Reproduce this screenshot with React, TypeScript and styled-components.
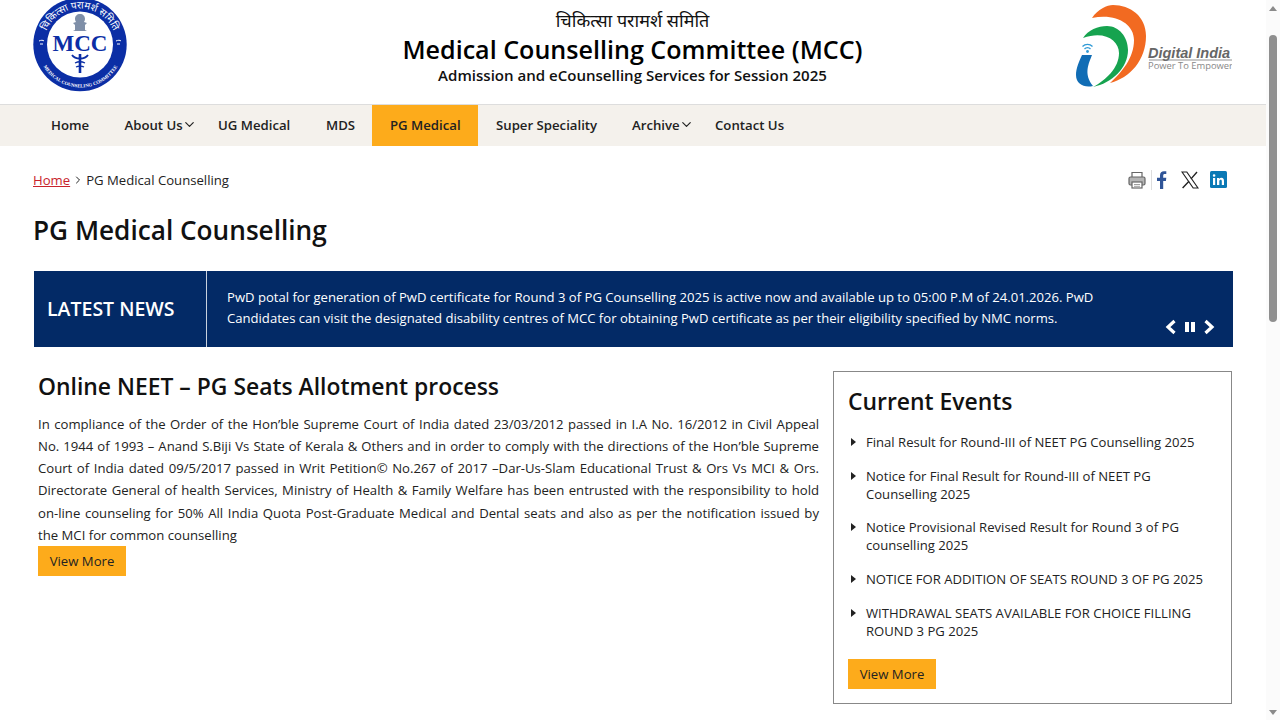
import React from "react";
import styled, { createGlobalStyle } from "styled-components";
import { ChevronDown, ChevronRight } from "lucide-react";

const Global = createGlobalStyle`
  html, body { margin: 0; padding: 0; background: #fff; overflow: hidden; height: 720px; }
  body { font-family: "Open Sans", "Noto Sans", sans-serif; color: #111; }
  a { text-decoration: none; color: inherit; }
`;

const Page = styled.div`
  width: 1266px;
  height: 720px;
  overflow: hidden;
`;
const Header = styled.header`
  height: 104px;
  padding: 0 34px 0 33px;
  display: grid;
  grid-template-columns: 200px 1fr 200px;
  box-sizing: border-box;
  align-items: start;
`;
const HeaderCenter = styled.div`
  text-align: center;
  padding-top: 8px;
`;
const Hindi = styled.div`
  font-size: 18px;
  line-height: 24px;
  color: #111;
`;
const SiteTitle = styled.div`
  font-size: 25.1px;
  font-weight: 600;
  line-height: 33px;
  margin-top: 1px;
  color: #000;
`;
const SiteSub = styled.div`
  font-size: 15.05px;
  font-weight: 600;
  line-height: 20px;
  margin-top: -1px;
  color: #111;
`;
const DigitalWrap = styled.div`
  display: flex;
  justify-content: flex-end;
`;
const Nav = styled.nav`
  height: 42px;
  border-top: 1px solid #ddd;
  background: #f4f1ec;
  box-sizing: border-box;
  padding-left: 33px;
  display: flex;
  align-items: stretch;
`;
const NavItem = styled.a<{ $active?: boolean; $w: number }>`
  width: ${(p) => p.$w}px;
  display: flex;
  align-items: center;
  padding: 0 0 2px 18px;
  box-sizing: border-box;
  font-size: 13.2px;
  font-weight: 600;
  color: #222;
  background: ${(p) => (p.$active ? "#fdab1b" : "transparent")};
  white-space: nowrap;
  svg { margin-left: -1px; }
`;
const Container = styled.main`
  padding: 0 33px;
`;
const TopRow = styled.div`
  height: 68px;
  display: flex;
  justify-content: space-between;
  align-items: center;
`;
const Crumbs = styled.div`
  font-size: 13.15px;
  color: #222;
  display: flex;
  align-items: center;
  padding-bottom: 1px;
  a { color: #c8232c; text-decoration: underline; }
  svg { margin: 1px 2px 0 2px; }
`;
const Social = styled.div`
  display: flex;
  align-items: center;
  height: 22px;
  margin-right: 5px;
  padding-bottom: 1px;
`;
const PrintBox = styled.div`
  display: flex;
  align-items: center;
  height: 20px;
  padding-right: 5px;
  border-right: 1px solid #ddd;
`;
const SocialIcon = styled.svg<{ $gap: number }>`
  margin-left: ${(p) => p.$gap}px;
  display: block;
`;
const PageTitle = styled.h1`
  margin: -1px 0 0;
  font-size: 26.2px;
  line-height: 34px;
  font-weight: 600;
  color: #111;
  height: 58px;
`;
const News = styled.section`
  position: relative;
  height: 76px;
  background: #032a66;
  color: #fff;
  display: flex;
  width: 1199px;
  margin-left: 1px;
`;
const NewsLabel = styled.div`
  width: 159px;
  border-right: 1px solid #c9d1de;
  display: flex;
  align-items: center;
  padding-left: 13px;
  padding-bottom: 1px;
  font-size: 19.5px;
  font-weight: 600;
`;
const NewsText = styled.div`
  padding: 16px 0 0 20px;
  width: 880px;
  font-size: 13.1px;
  line-height: 21px;
  font-weight: 500;
`;
const NewsControls = styled.div`
  position: absolute;
  right: 18px;
  bottom: 12px;
  display: flex;
  align-items: center;
  gap: 7px;
`;
const Columns = styled.div`
  display: flex;
  align-items: flex-start;
  padding-left: 5px;
  margin-top: 24px;
`;
const Left = styled.div`
  width: 781px;
`;
const ArticleTitle = styled.h2`
  margin: 0 0 10px;
  font-size: 22.9px;
  line-height: 31px;
  font-weight: 600;
  color: #111;
  height: 32px;
`;
const Para = styled.p`
  margin: 0;
  font-size: 13.15px;
  line-height: 22.15px;
  color: #222;
  text-align: justify;
`;
const MoreBtn = styled.a`
  display: block;
  width: 88px;
  height: 30px;
  line-height: 30px;
  background: #fdab1b;
  text-align: center;
  font-size: 13.15px;
  color: #222;
`;
const Events = styled.aside`
  margin-left: 14px;
  width: 399px;
  height: 333px;
  box-sizing: border-box;
  border: 1px solid #888;
  padding: 14px 14px 0;
`;
const EventsTitle = styled.h3`
  margin: 0 0 16px;
  font-size: 22.9px;
  line-height: 31px;
  font-weight: 600;
  color: #111;
`;
const EventList = styled.ul`
  list-style: none;
  margin: 0 0 19.5px;
  padding: 0;
`;
const EventItem = styled.li`
  position: relative;
  padding-left: 18px;
  margin-bottom: 15.7px;
  font-size: 13.1px;
  line-height: 18px;
  color: #222;
  &::before {
    content: "";
    position: absolute;
    left: 3px;
    top: 5px;
    border-left: 5px solid #222;
    border-top: 4px solid transparent;
    border-bottom: 4px solid transparent;
  }
`;
const ScrollBar = styled.div`
  position: fixed;
  top: 0;
  right: 0;
  width: 14px;
  height: 720px;
  background: #fbfbfb;
`;
const Thumb = styled.div`
  position: absolute;
  top: 35px;
  left: 3px;
  width: 8px;
  height: 287px;
  border-radius: 4px;
  background: #8f8f8f;
`;
const ArrowUp = styled.div`
  position: absolute;
  top: 6px;
  left: 3px;
  border-left: 4px solid transparent;
  border-right: 4px solid transparent;
  border-bottom: 5px solid #8a8a8a;
`;
const ArrowDown = styled.div`
  position: absolute;
  bottom: 5px;
  left: 3px;
  border-left: 4px solid transparent;
  border-right: 4px solid transparent;
  border-top: 5px solid #8a8a8a;
`;

const McLogo = () => (
  <svg width="96" height="92" viewBox="0 0 96 92" style={{ display: "block" }}>
    <defs>
      <path id="ringTop" d="M 11 44.5 A 36 36 0 0 1 83 44.5" />
      <path id="ringBot" d="M 4.5 44.5 A 42.5 42.5 0 0 0 90.5 44.5" />
    </defs>
    <circle cx="47" cy="44.5" r="46.7" fill="#0b2ea5" />
    <circle cx="47" cy="44.5" r="33" fill="#fff" />
    <text fontSize="10" fill="#fff" fontFamily="Noto Sans, sans-serif">
      <textPath href="#ringTop" startOffset="50%" textAnchor="middle">चिकित्सा परामर्श समिति</textPath>
    </text>
    <text fontSize="4.8" fontWeight="700" fill="#fff" fontFamily="Liberation Serif, serif">
      <textPath href="#ringBot" startOffset="50%" textAnchor="middle">MEDICAL COUNSELING COMMITTEE</textPath>
    </text>
    <path d="M6 41c2-1 4-1 5 0M7 44h3M83 41c2-1 4-1 5 0M84 44h3" stroke="#fff" strokeWidth="1" fill="none" />
    <text x="47" y="51" textAnchor="middle" fontFamily="Liberation Serif, serif" fontWeight="700" fontSize="23" fill="#0b2ea5">MCC</text>
    <path d="M47 14c-3 0-5 2-5 5 0 1 .3 2 1 3l-3 1 2 2v5l-2 1h14l-2-1v-5l2-2-3-1c.7-1 1-2 1-3 0-3-2-5-5-5z" fill="#7f8fa8" />
    <path d="M47 54v19" stroke="#0b2ea5" strokeWidth="2.6" />
    <path d="M39 55c2 3 5 3.5 8 3.5s6-.5 8-3.5" stroke="#0b2ea5" strokeWidth="1.8" fill="none" />
    <path d="M42 63c3-1.5 7-1.5 10 0M43 67c2-1 6-1 8 0" stroke="#0b2ea5" strokeWidth="1.3" fill="none" />
  </svg>
);

const DigitalLogo = () => (
  <svg width="160" height="92" viewBox="0 0 160 92" style={{ display: "block" }}>
    <path d="M20 18C26 9 35 5 41 5 58 5 74 16 74 36 74 60 58 78 38 83 50 72 62 58 62 40 62 24 44 13 20 18Z" fill="#f26a21" />
    <path d="M11 38C16 30 26 26 35 26 47 26 56 37 56 50 56 68 40 83 21 87 34 80 47 68 47 53 47 40 32 30 11 38Z" fill="#16a34f" />
    <path d="M10 55H20C17 63 11 74 21 86 12 88 4 84 4 75 4 68 7 62 10 55Z" fill="#116db5" />
    <path d="M12.5 49a4 4 0 0 1 6 0M10.5 46.5a7 7 0 0 1 10 0" stroke="#2f9ad6" strokeWidth="1.3" fill="none" />
    <circle cx="15.5" cy="51.5" r="1.4" fill="#2f9ad6" />
    <text x="76" y="58" fontFamily="Liberation Sans, sans-serif" fontStyle="italic" fontWeight="700" fontSize="14.5" fill="#666">Digital India</text>
    <path d="M77 60H160" stroke="#777" strokeWidth=".8" />
    <text x="76" y="68.5" fontFamily="Open Sans, sans-serif" fontSize="9.4" fill="#888">Power To Empower</text>
  </svg>
);

const PrintIcon = () => (
  <svg width="18" height="20" viewBox="0 0 18 20" style={{ display: "block" }}>
    <path d="M4 7V2.5h10V7" fill="#fff" stroke="#666" strokeWidth="1.2" />
    <rect x="1" y="7" width="16" height="8" rx="1.5" fill="#b5b5b5" stroke="#666" strokeWidth="1.2" />
    <rect x="4" y="12" width="10" height="6" fill="#fff" stroke="#666" strokeWidth="1.2" />
    <path d="M6 14.5h6M6 16.3h6" stroke="#888" strokeWidth=".8" />
  </svg>
);
const Fb = () => (
  <SocialIcon $gap={4} width="12" height="20" viewBox="0 0 12 20">
    <path d="M4 19V11H1V7.8h3V5.2C4 2.6 5.6 1.2 8 1.2c1 0 1.9.1 2.3.1v2.8H8.8c-1.3 0-1.6.6-1.6 1.5v2.2h3.1l-.4 3.2H7.2v8z" fill="#2f5497" />
  </SocialIcon>
);
const Xl = () => (
  <SocialIcon $gap={13} width="18" height="18" viewBox="0 0 18 18">
    <path d="M1 1h4.8l11.2 16h-4.8z" fill="none" stroke="#222" strokeWidth="1.2" />
    <path d="M16 1 10 7.9M8 10.2 1.6 17" stroke="#222" strokeWidth="1.4" />
  </SocialIcon>
);
const Li = () => (
  <SocialIcon $gap={11} width="18" height="18" viewBox="0 0 18 18">
    <rect width="17" height="17" rx="1.5" fill="#0a79b5" />
    <path d="M3 7h2.2v7H3zM4.1 3.2a1.3 1.3 0 1 1 0 2.6 1.3 1.3 0 0 1 0-2.6zM7 7h2.1v1c.5-.8 1.3-1.2 2.3-1.2 2 0 2.6 1.3 2.6 3.2v4h-2.2v-3.6c0-1-.3-1.6-1.1-1.6-.9 0-1.4.6-1.4 1.7V14H7z" fill="#fff" />
  </SocialIcon>
);

const navItems = [
  { t: "Home", w: 73.5 },
  { t: "About Us", w: 93.5, c: true },
  { t: "UG Medical", w: 108 },
  { t: "MDS", w: 64 },
  { t: "PG Medical", w: 106, a: true },
  { t: "Super Speciality", w: 136 },
  { t: "Archive", w: 83, c: true },
  { t: "Contact Us", w: 110 },
];

const events = [
  "Final Result for Round-III of NEET PG Counselling 2025",
  "Notice for Final Result for Round-III of NEET PG Counselling 2025",
  "Notice Provisional Revised Result for Round 3 of PG counselling 2025",
  "NOTICE FOR ADDITION OF SEATS ROUND 3 OF PG 2025",
  "WITHDRAWAL SEATS AVAILABLE FOR CHOICE FILLING ROUND 3 PG 2025",
];

export default function App() {
  return (
    <>
      <Global />
      <Page>
        <Header>
          <McLogo />
          <HeaderCenter>
            <Hindi>चिकित्सा परामर्श समिति</Hindi>
            <SiteTitle>Medical Counselling Committee (MCC)</SiteTitle>
            <SiteSub>Admission and eCounselling Services for Session 2025</SiteSub>
          </HeaderCenter>
          <DigitalWrap><DigitalLogo /></DigitalWrap>
        </Header>
        <Nav>
          {navItems.map((n) => (
            <NavItem key={n.t} href="#" $w={n.w} $active={n.a}>
              {n.t}
              {n.c && <ChevronDown size={15} strokeWidth={1.9} />}
            </NavItem>
          ))}
        </Nav>
        <Container>
          <TopRow>
            <Crumbs><a href="#">Home</a><ChevronRight size={12} strokeWidth={2} />PG Medical Counselling</Crumbs>
            <Social>
              <PrintBox><PrintIcon /></PrintBox>
              <Fb /><Xl /><Li />
            </Social>
          </TopRow>
          <PageTitle>PG Medical Counselling</PageTitle>
          <News>
            <NewsLabel>LATEST NEWS</NewsLabel>
            <NewsText>PwD potal for generation of PwD certificate for Round 3 of PG Counselling 2025 is active now and available up to 05:00 P.M of 24.01.2026. PwD Candidates can visit the designated disability centres of MCC for obtaining PwD certificate as per their eligibility specified by NMC norms.</NewsText>
            <NewsControls>
              <svg width="12" height="16" viewBox="0 0 12 16"><path d="M9.5 2 3 8l6.5 6" fill="none" stroke="#fff" strokeWidth="3.2" /></svg>
              <svg width="12" height="12" viewBox="0 0 12 12"><path d="M1 1h4v10H1zM7 1h4v10H7z" fill="#fff" /></svg>
              <svg width="12" height="16" viewBox="0 0 12 16"><path d="M2.5 2 9 8l-6.5 6" fill="none" stroke="#fff" strokeWidth="3.2" /></svg>
            </NewsControls>
          </News>
          <Columns>
            <Left>
              <ArticleTitle>Online NEET – PG Seats Allotment process</ArticleTitle>
              <Para>In compliance of the Order of the Hon’ble Supreme Court of India dated 23/03/2012 passed in I.A No. 16/2012 in Civil Appeal No. 1944 of 1993 – Anand S.Biji Vs State of Kerala &amp; Others and in order to comply with the directions of the Hon’ble Supreme Court of India dated 09/5/2017 passed in Writ Petition© No.267 of 2017 –Dar-Us-Slam Educational Trust &amp; Ors Vs MCI &amp; Ors. Directorate General of health Services, Ministry of Health &amp; Family Welfare has been entrusted with the responsibility to hold on-line counseling for 50% All India Quota Post-Graduate Medical and Dental seats and also as per the notification issued by the MCI for common counselling</Para>
              <MoreBtn href="#">View More</MoreBtn>
            </Left>
            <Events>
              <EventsTitle>Current Events</EventsTitle>
              <EventList>
                {events.map((e) => <EventItem key={e}>{e}</EventItem>)}
              </EventList>
              <MoreBtn href="#">View More</MoreBtn>
            </Events>
          </Columns>
        </Container>
      </Page>
      <ScrollBar><ArrowUp /><Thumb /><ArrowDown /></ScrollBar>
    </>
  );
}
